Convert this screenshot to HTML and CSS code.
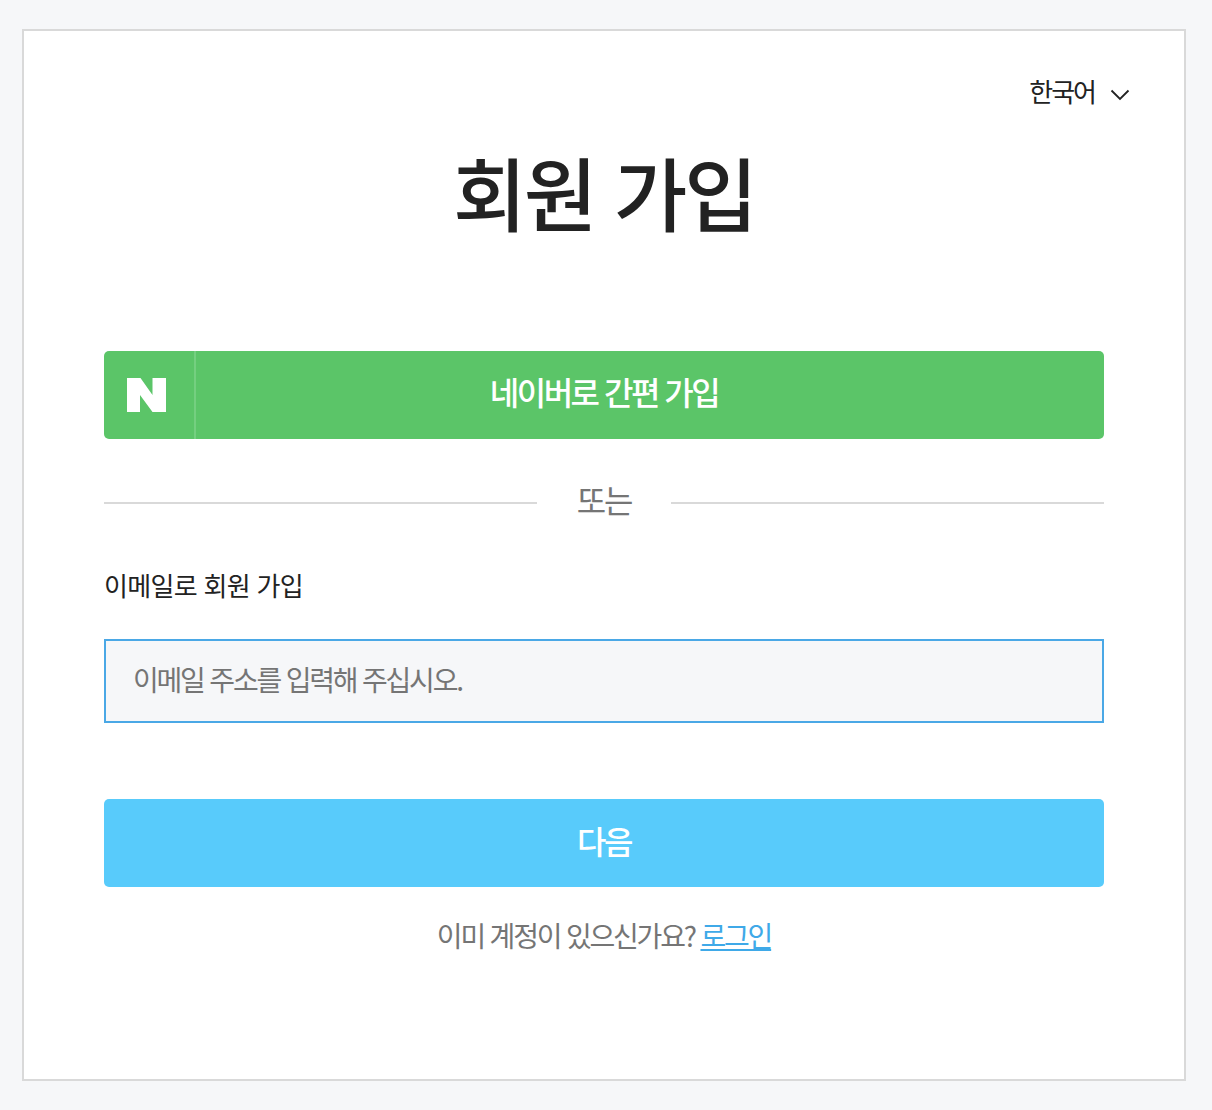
FILE: index.html
```html
<!DOCTYPE html>
<html lang="ko">
<head>
  <meta charset="UTF-8" />
  <meta name="viewport" content="width=device-width, initial-scale=1.0"/>
  <title>회원 가입</title>
  <link rel="stylesheet" href="styles.css">
</head>
<body>
  <div class="card">
    <div class="lang">
      <span class="lang-label">한국어</span>
      <svg class="lang-arrow" width="20" height="12" viewBox="0 0 20 12"><path d="M1.5 1.5l8.5 8.5 8.5-8.5" fill="none" stroke="#222" stroke-width="1.8"/></svg>
    </div>
    <h1>회원 가입</h1>

    <a class="btn btn-naver" href="#">
      <span class="naver-icon">
        <svg width="39" height="34" viewBox="0 0 39 34"><path d="M0 0h13.5l12 17V0H39v34H25.5L13 17v17H0z" fill="#fff"/></svg>
      </span>
      <span class="naver-label">네이버로 간편 가입</span>
    </a>

    <div class="divider"><span class="divider-text">또는</span></div>

    <form>
      <label for="email">이메일로 회원 가입</label>
      <input type="text" id="email" placeholder="이메일 주소를 입력해 주십시오.">
      <button type="button" class="btn btn-next">다음</button>
    </form>

    <p class="login">이미 계정이 있으신가요? <a href="#">로그인</a></p>
  </div>
</body>
</html>
```

FILE: styles.css
```css
* {
  box-sizing: border-box;
}

body {
  margin: 0;
  padding: 29px 26px 29px 22px;
  background-color: #f6f7f9;
  font-family: "Noto Sans CJK KR", "Noto Sans", sans-serif;
  color: #222;
}

.card {
  height: 1052px;
  padding: 42px 80px 0;
  background-color: #fff;
  border: 2px solid #d9d9d9;
}

.lang {
  display: flex;
  justify-content: flex-end;
  align-items: center;
  gap: 15px;
  height: 38px;
  margin-right: -26px;
  font-size: 26px;
  letter-spacing: -2px;
}

.lang-label {
  margin-bottom: 4px;
}

.lang-arrow {
  margin-top: 5px;
}

h1 {
  margin: 30px 0 0;
  height: 100px;
  font-size: 80px;
  line-height: 98px;
  font-weight: 500;
  letter-spacing: -3px;
  text-align: center;
}

.btn {
  display: flex;
  align-items: center;
  justify-content: center;
  width: 100%;
  height: 88px;
  border: none;
  border-radius: 5px;
  color: #fff;
  font-family: inherit;
  font-size: 32px;
  font-weight: 500;
  letter-spacing: -2.5px;
  text-decoration: none;
}

.btn-naver {
  margin-top: 110px;
  background-color: #5bc568;
}

.naver-icon {
  display: flex;
  align-items: center;
  justify-content: center;
  flex: none;
  width: 92px;
  height: 100%;
  padding-right: 5px;
  border-right: 2px solid #74cf80;
}

.naver-label {
  flex: 1;
  padding: 0 92px 8px 0;
  text-align: center;
}

.divider {
  display: flex;
  align-items: center;
  gap: 40px;
  margin-top: 40px;
  height: 48px;
  font-size: 32px;
  letter-spacing: -2.2px;
  color: #757575;
}

.divider-text {
  margin-bottom: 8px;
}

.divider::before,
.divider::after {
  content: "";
  flex: 1;
  height: 2px;
  background-color: #d9d9d9;
}

label {
  display: block;
  margin-top: 38px;
  height: 40px;
  font-size: 26px;
  line-height: 40px;
  letter-spacing: -0.7px;
}

input {
  display: block;
  width: 100%;
  height: 84px;
  margin-top: 34px;
  padding: 0 28px 4px 27px;
  border: 2px solid #4aa8e6;
  background-color: #f6f7f9;
  outline: none;
  font-family: inherit;
  font-size: 28px;
  letter-spacing: -2.2px;
  color: #222;
}

input::placeholder {
  color: #757575;
  opacity: 1;
}

.btn-next {
  margin-top: 76px;
  padding-bottom: 7px;
  background-color: #58cbfb;
}

.login {
  margin: 28px 0 0;
  font-size: 28px;
  line-height: 40px;
  letter-spacing: -2.2px;
  text-align: center;
  color: #757575;
}

.login a {
  color: #3fa9e8;
}
```
